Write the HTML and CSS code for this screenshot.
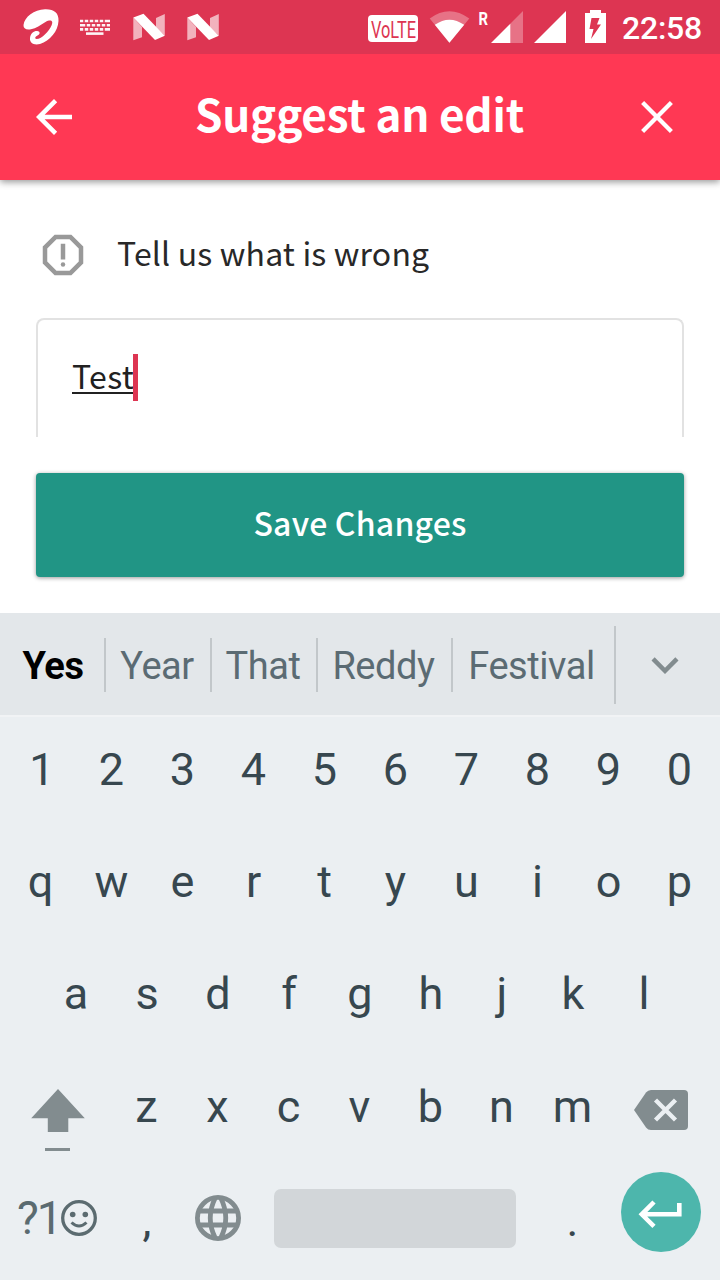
FILE: index.html
```html
<!DOCTYPE html>
<html lang="en">
<head>
<meta charset="utf-8">
<title>Suggest an edit</title>
<link rel="stylesheet" href="styles.css">
</head>
<body>
<div class="screen">
  <div class="status">
    <svg class="status-icons" width="240" height="54" viewBox="0 0 240 54" fill="#fff">
      <path d="M23.500 25C24.500 17 34 9.500 45 9.300C54 9 59 13 58.500 21C58 31 50 41 40 43.900C34 45.500 29.500 43 30 38C30.500 33 35 30.300 38 31.300C40.500 32 40 34.500 37.500 35.500C35 36.500 34.500 38.500 36.500 39C42 39 49 31 51.500 25.500C54 20 50 19.500 45.500 22C40.500 25 36 28.500 31 29.200C26 30 23.300 28.500 23.500 25Z"/>
      <g opacity=".95"><path d="M80 19.700H110V22.300H80ZM80 23.900H110V26.500H80ZM80 28.100H110V30.700H80Z"/><rect x="86" y="32.300" width="17.500" height="2.600"/></g>
      <path stroke="#dd3552" stroke-width="1.500" d="M84 19V22.800M89 19V22.800M94 19V22.800M99 19V22.800M104 19V22.800M86 23.500V27M91 23.500V27M96 23.500V27M101 23.500V27M106 23.500V27M84 27.700V31M89 27.700V31M94 27.700V31M99 27.700V31M104 27.700V31"/>
      <g id="n-logo"><path opacity=".62" d="M133.300 17.500L142 27V37.200L133.300 40.200ZM156 18L164.800 14V35.500L156 27.500Z"/><path d="M133.300 17.500L143.500 13.700L164.800 35.700L155 40Z"/></g>
      <use href="#n-logo" x="54"/>
    </svg>
    <svg class="status-icons" width="260" height="54" viewBox="360 0 260 54" fill="#fff">
      <rect x="368" y="15" width="50" height="27" rx="4"/>
      <text class="volte" x="371" y="38.200" textLength="45" lengthAdjust="spacingAndGlyphs">VoLTE</text>
      <path opacity=".3" d="M449.400 42.700L429.700 18.500Q449.400 4 469.300 18.500Z"/>
      <path d="M449.400 42.700L434.800 24.800Q449.400 14.500 464.200 24.800Z"/>
      <text class="roaming" x="478.500" y="25" textLength="9.500" lengthAdjust="spacingAndGlyphs">R</text>
      <path opacity=".3" d="M510 24L523 11V43H510Z"/>
      <path d="M491 43L510.300 23.700V43ZM534 43L566 11V43Z"/>
      <path d="M590 13V10H601V13H606V43H585V13Z"/>
      <path fill="#dd3552" d="M591.500 18H599.500L597 24.500H601L591 39L593.500 29H589.500Z"/>
    </svg>
    <span class="clock">22:58</span>
  </div>

  <div class="header">
    <svg class="icon" viewBox="0 0 24 24" fill="#fff"><path d="M20 11H7.830l5.590-5.590L12 4l-8 8 8 8 1.410-1.410L7.830 13H20z"/></svg>
    <h1 class="title">Suggest an edit</h1>
    <svg class="icon" viewBox="0 0 24 24" fill="none" stroke="#fff" stroke-width="1.900"><path d="M5.600 5.600L18.400 18.400M18.400 5.600L5.600 18.400"/></svg>
  </div>

  <div class="form">
    <div class="prompt">
      <svg class="icon" viewBox="0 0 24 24" fill="#999"><path fill-rule="evenodd" d="M15.730 3H8.270L3 8.270v7.460L8.270 21h7.460L21 15.730V8.270zM19 14.900L14.900 19H9.100L5 14.900V9.100L9.100 5h5.800L19 9.100z"/><path d="M11 7h2v7h-2z"/><circle cx="12" cy="16.200" r="1"/></svg>
      <span class="prompt-text">Tell us what is wrong</span>
    </div>
    <div class="field"><span class="typed">Test</span><span class="caret"></span></div>
    <div class="save">Save Changes</div>
  </div>

  <div class="suggestions">
    <span class="word first">Yes</span><span class="word w2">Year</span><span class="word w3">That</span><span class="word w4">Reddy</span><span class="word w5">Festival</span>
    <span class="expand"><svg class="icon" viewBox="0 0 24 24" fill="#828c8f"><path d="M7.410 8.590L12 13.170l4.590-4.580L18 10l-6 6-6-6z"/></svg></span>
  </div>

  <div class="keyboard">
    <div class="row"><span class="one">1</span><span>2</span><span>3</span><span>4</span><span>5</span><span>6</span><span>7</span><span>8</span><span>9</span><span>0</span></div>
    <div class="row"><span>q</span><span>w</span><span>e</span><span>r</span><span>t</span><span>y</span><span>u</span><span>i</span><span>o</span><span>p</span></div>
    <div class="row"><span>a</span><span>s</span><span>d</span><span>f</span><span>g</span><span>h</span><span>j</span><span>k</span><span>l</span></div>
    <div class="row wide">
      <svg width="111" height="112" viewBox="0 1050 111 112" fill="#828c8f"><path d="M58 1089L84.800 1118.300H68.300V1132H47.800V1118.300H31.200ZM45 1148H70V1151H45Z"/></svg>
      <span>z</span><span>x</span><span>c</span><span>v</span><span>b</span><span>n</span><span>m</span>
      <svg width="112" height="112" viewBox="608 1050 112 112"><path fill="#828c8f" d="M634 1110L646 1092.500Q648 1090 651 1090H684Q688 1090 688 1094V1126Q688 1130 684 1130H651Q648 1130 646 1127.500Z"/><path stroke="#ebeff2" stroke-width="4.400" d="M655.500 1100L675.500 1120M675.500 1100L655.500 1120"/></svg>
    </div>
    <div class="bottom">
      <div class="symbols"><span class="symbol-text">?1</span><svg width="38" height="38" viewBox="-19 -19 38 38" fill="none" stroke="#5b6b70" stroke-width="3.300"><circle r="16.300"/><path d="M-7.500 4.500Q0 11.500 7.500 4.500" stroke-width="3"/><g fill="#5b6b70" stroke="none"><circle cx="-6.300" cy="-3.500" r="2.800"/><circle cx="6.300" cy="-3.500" r="2.800"/></g></svg></div>
      <span class="key">,</span>
      <svg class="globe" width="48" height="48" viewBox="-24 -24 48 48" fill="none" stroke="#828c8f" stroke-width="4.800"><circle r="20.600"/><path d="M-20 -7H20M-20 7H20M-2.500 -20.500Q-13 0 -2.500 20.500M2.500 -20.500Q13 0 2.500 20.500"/></svg>
      <div class="space"></div>
      <span class="key">.</span>
      <div class="enter"><svg width="80" height="80" viewBox="621 1172 80 80" fill="none" stroke="#fff" stroke-width="4.600"><path d="M679.300 1203V1214.300H642M654 1202L641.800 1214.300L654 1226.300"/></svg></div>
    </div>
  </div>
</div>
</body>
</html>
```

FILE: styles.css
```css
* { box-sizing: border-box; }
body { margin: 0; background: #fff; font-family: Roboto, sans-serif; }
.screen { width: 720px; height: 1280px; overflow: hidden; display: flex; flex-direction: column; }
.icon { width: 54px; height: 54px; flex: none; display: block; }

.status { position: relative; z-index: 1; height: 54px; flex: none; background: #dd3552; display: flex; align-items: center; }
.status-icons { flex: none; display: block; }
.status-icons + .status-icons { margin-left: 120px; }
.volte { font: 400 24.500px Roboto, sans-serif; fill: #dd3552; }
.roaming { font: 700 18px Roboto, sans-serif; fill: #fff; }
.clock { margin-left: 2px; color: #fff; font-size: 32px; font-weight: 500; line-height: 54px; padding-top: 2px; letter-spacing: -.25px; white-space: nowrap; }

.header { height: 126px; flex: none; padding: 0 36px 0 27px; background: #ff3854; display: flex; align-items: center; justify-content: space-between; box-shadow: 0 2px 7px rgba(0, 0, 0, .42); }
.title { margin: 0 0 8px 8px; color: #fff; font: 700 44px/60px "Noto Sans CJK SC", sans-serif; letter-spacing: -.2px; white-space: nowrap; }

.form { height: 433px; flex: none; padding: 48px 36px 36px; display: flex; flex-direction: column; }
.prompt { height: 54px; display: flex; align-items: center; gap: 27px; font: 400 32px/54px "Noto Sans CJK SC", sans-serif; color: #282828; }
.prompt-text { padding-bottom: 7px; letter-spacing: .16px; white-space: nowrap; }
.field { height: 119px; margin-top: 36px; padding: 34px 34px 0; border: 2px solid #e2e2e2; border-bottom: 0; border-radius: 8px 8px 0 0; display: flex; align-items: flex-start; font: 400 32px/47px "Noto Sans CJK SC", sans-serif; color: #212121; }
.typed { margin-top: -2px; letter-spacing: .3px; text-decoration: underline; text-decoration-thickness: 2px; text-underline-offset: 3px; }
.caret { width: 5px; height: 47px; margin-left: -1px; background: #dd3552; }
.save { height: 104px; margin-top: 36px; border-radius: 4px; background: #219585; color: #fff; text-align: center; font: 500 32px/98px "Noto Sans CJK SC", sans-serif; letter-spacing: .2px; box-shadow: 0 1px 4px rgba(0, 0, 0, .4); }

.suggestions { height: 102px; flex: none; background: #e3e7ea; display: flex; align-items: center; color: #5b6b73; font-size: 38px; letter-spacing: -.45px; }
.word { height: 54px; margin-top: 2px; padding-right: 2px; line-height: 57px; text-align: center; border-right: 2px solid #c2c7ca; }
.first { width: 106px; padding: 0 0 0 2px; color: #000; font-weight: 700; }
.w2 { width: 106px; }
.w3 { width: 106px; }
.w4 { width: 135px; }
.w5 { width: 161px; padding-right: 4px; border-right: 0; }
.expand { width: 106px; height: 78px; margin-top: 2px; padding-left: 22px; border-left: 2px solid #c2c7ca; display: flex; align-items: center; }

.keyboard { height: 565px; background: #ebeff2; border-top: 2px solid #f1f3f5; color: #37474f; font-size: 45px; }
.row { height: 112px; display: flex; justify-content: center; line-height: 112px; }
.row:first-child { height: 109px; line-height: 105px; }
.row.wide { line-height: 114px; }
.row span { width: 71px; text-align: center; }
.row .one { padding: 0 0 0 3px; }
.row svg { display: block; flex: none; }
.bottom { height: 118px; display: grid; grid-template-columns: 111px 71px 72px 282px 72px 112px; align-items: center; }
.symbols { display: flex; align-items: center; padding: 0 0 7px 17px; }
.symbol-text { width: 43px; flex: none; color: #5b6b70; font-size: 46px; line-height: 60px; letter-spacing: -2px; white-space: nowrap; }
.symbols svg { flex: none; }
.key { padding-left: 1px; text-align: center; line-height: 118px; }
.globe { margin: 0 0 6px 12px; }
.space { width: 242px; height: 59px; margin: 0 auto 5px; border-radius: 7px; background: #d2d6d9; }
.enter { width: 80px; height: 80px; margin: 0 0 18px 13px; border-radius: 50%; background: #4db6ac; }
.enter svg { display: block; }
```
